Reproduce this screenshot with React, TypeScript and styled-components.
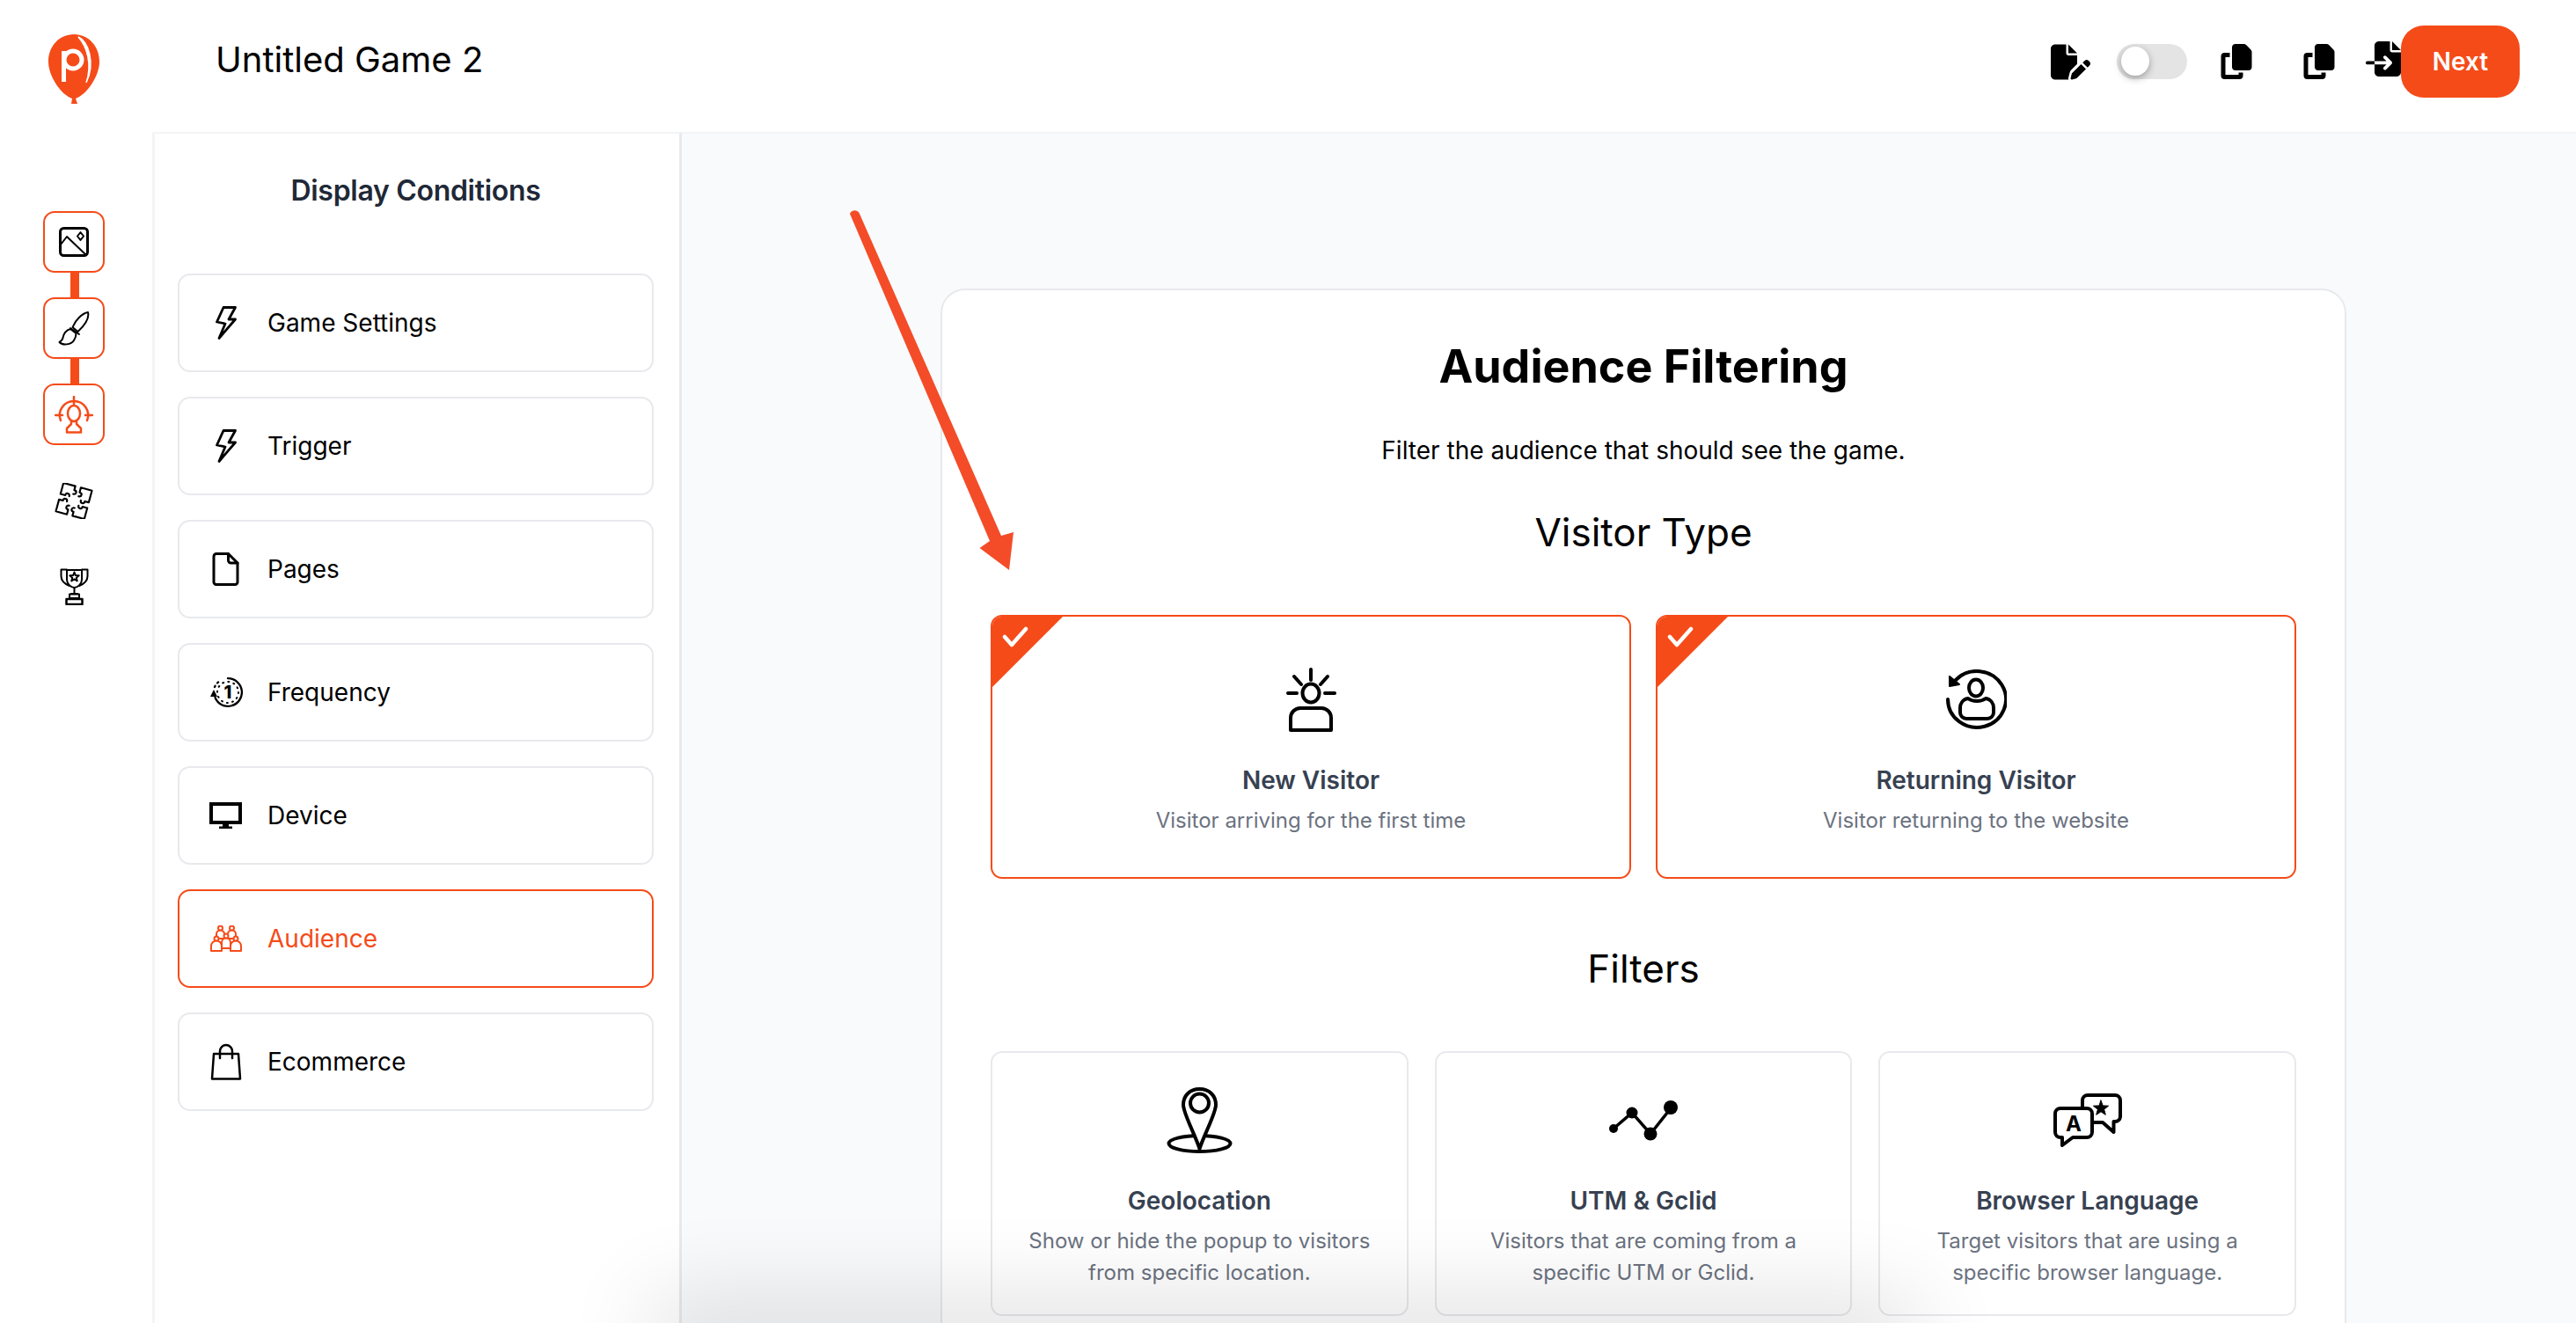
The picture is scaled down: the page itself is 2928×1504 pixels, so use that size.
import styled, { createGlobalStyle } from "styled-components";
import { FaFilePen, FaCopy, FaFileImport } from "react-icons/fa6";
import type { ReactNode } from "react";

const ORANGE = "#f54b19";

const GlobalStyle = createGlobalStyle`
  html, body {
    margin: 0;
    padding: 0;
    height: 100%;
    overflow: hidden;
    background: #fff;
  }
  * {
    box-sizing: border-box;
  }
  body {
    font-family: Inter, "Noto Sans", sans-serif;
    color: #000;
  }
`;

const Shell = styled.div`
  position: relative;
  width: 2928px;
  height: 1504px;
  overflow: hidden;
  display: flex;
  flex-direction: column;
`;

const Header = styled.header`
  height: 150px;
  flex: none;
  display: flex;
  align-items: center;
  padding: 0 64px 0 55px;
`;

const Logo = styled.svg`
  width: 58px;
  height: 79px;
  flex: none;
  margin-top: 7px;
`;

const GameTitle = styled.h1`
  margin: -15px 0 0 132px;
  font-size: 40px;
  line-height: 48px;
  font-weight: 400;
  flex: 1;
`;

const ToolIcons = styled.div`
  display: flex;
  align-items: center;
  margin-top: -10px;
  font-size: 40px;
  line-height: 0;
  color: #000;
`;

const Toggle = styled.div`
  position: relative;
  width: 80px;
  height: 40px;
  margin: 0 36px 0 30px;
  border-radius: 20px;
  background: #e4e4e4;
`;

const Knob = styled.span`
  position: absolute;
  left: 5px;
  top: 3px;
  width: 32px;
  height: 33px;
  border-radius: 50%;
  background: #fff;
  box-shadow: 0 3px 8px rgba(0, 0, 0, 0.32);
`;

const ToolGap = styled.span<{ $w: number }>`
  display: block;
  width: ${(p) => p.$w}px;
`;

const ImportSlot = styled.span`
  display: block;
  margin-bottom: 6px;
`;

const NextButton = styled.button`
  width: 135px;
  height: 82px;
  border: 0;
  border-radius: 26px;
  background: ${ORANGE};
  color: #fff;
  font-family: inherit;
  font-size: 28px;
  font-weight: 600;
  margin-top: -10px;
`;

const Body = styled.div`
  flex: 1;
  min-height: 0;
  display: flex;
`;

const Rail = styled.nav`
  width: 173px;
  flex: none;
  padding: 90px 0 0 49px;
  display: flex;
  flex-direction: column;
`;

const Step = styled.div<{ $boxed?: boolean }>`
  width: 70px;
  height: 70px;
  flex: none;
  display: flex;
  align-items: center;
  justify-content: center;
  border-radius: 13px;
  border: 2px solid ${(p) => (p.$boxed ? ORANGE : "transparent")};
`;

const Connector = styled.div<{ $on?: boolean }>`
  width: 10px;
  height: 28px;
  flex: none;
  margin-left: 31px;
  background: ${(p) => (p.$on ? ORANGE : "transparent")};
`;

const Panel = styled.aside`
  width: 602px;
  flex: none;
  border-top: 2px solid #f3f4f6;
  border-left: 3px solid #f3f4f6;
  border-right: 3px solid #e8e9ed;
  padding: 45px 29px 0 26px;
`;

const PanelTitle = styled.h2`
  margin: 0 0 74px;
  font-size: 32px;
  line-height: 40px;
  font-weight: 600;
  letter-spacing: -0.3px;
  color: #1f2937;
  text-align: center;
`;

const ItemList = styled.div`
  display: flex;
  flex-direction: column;
  gap: 28px;
`;

const Item = styled.div<{ $active?: boolean }>`
  height: 112px;
  display: flex;
  align-items: center;
  gap: 28px;
  padding-left: 33px;
  border: 2px solid ${(p) => (p.$active ? ORANGE : "#e8e9ed")};
  border-radius: 14px;
  background: #fff;
  color: ${(p) => (p.$active ? ORANGE : "#000")};
  font-size: 28px;
  line-height: 36px;
`;

const ItemIcon = styled.span`
  width: 39px;
  display: flex;
  justify-content: center;
  flex: none;
`;

const Main = styled.main`
  flex: 1;
  min-width: 0;
  background: #f9fafb;
  border-top: 2px solid #f3f4f6;
  padding: 176px 0 0 294px;
`;

const Card = styled.section`
  width: 1598px;
  height: 1300px;
  background: #fff;
  border: 2px solid #e8e9ed;
  border-radius: 28px;
  padding: 53px 55px 0;
  text-align: center;
`;

const Title = styled.h2`
  margin: 0;
  font-size: 52px;
  line-height: 68px;
  font-weight: 700;
`;

const Sub = styled.p`
  margin: 41px 0 0;
  font-size: 28px;
  line-height: 40px;
`;

const SectionTitle = styled.h3<{ $top: number }>`
  margin: ${(p) => p.$top}px 0 66px;
  font-size: 44px;
  line-height: 56px;
  font-weight: 400;
`;

const Grid = styled.div<{ $cols: number; $gap: number }>`
  display: grid;
  grid-template-columns: repeat(${(p) => p.$cols}, 1fr);
  gap: ${(p) => p.$gap}px;
`;

const OptionCard = styled.div<{ $selected?: boolean }>`
  position: relative;
  height: ${(p) => (p.$selected ? 300 : 301)}px;
  padding-top: ${(p) => (p.$selected ? 57 : 39)}px;
  border: 2px solid ${(p) => (p.$selected ? ORANGE : "#e8e9ed")};
  border-radius: 13px;
  overflow: hidden;
  background: #fff;
`;

const Corner = styled.div`
  position: absolute;
  left: -2px;
  top: -2px;
  width: 84px;
  height: 84px;
  background: ${ORANGE};
  clip-path: polygon(0 0, 100% 0, 0 100%);
`;

const Check = styled.svg`
  position: absolute;
  left: 11px;
  top: 11px;
  width: 30px;
  height: 24px;
`;

const OptionIcon = styled.div`
  height: 75px;
  display: flex;
  align-items: center;
  justify-content: center;
`;

const OptionName = styled.div`
  margin-top: 36px;
  font-size: 28px;
  line-height: 36px;
  font-weight: 600;
  color: #374151;
`;

const OptionText = styled.div`
  margin-top: 10px;
  font-size: 24px;
  line-height: 36px;
  color: #6b7280;
`;

const Arrow = styled.svg`
  position: absolute;
  left: 960px;
  top: 230px;
  width: 200px;
  height: 430px;
`;

const BottomShade = styled.div`
  position: absolute;
  left: 770px;
  width: 1380px;
  bottom: -30px;
  height: 30px;
  box-shadow: 0 0 100px 30px rgba(0, 0, 0, 0.12);
`;

const star = (cx: number, cy: number, R: number, r: number) =>
  Array.from({ length: 10 }, (_, i) => {
    const a = (Math.PI / 5) * i - Math.PI / 2;
    const d = i % 2 ? r : R;
    return `${(cx + d * Math.cos(a)).toFixed(1)},${(cy + d * Math.sin(a)).toFixed(1)}`;
  }).join(" ");

const line = { fill: "none", stroke: "currentColor", strokeLinecap: "round", strokeLinejoin: "round" } as const;

function ImageIcon() {
  return (
    <svg width="34" height="34" viewBox="0 0 34 34" {...line} strokeWidth="2.5">
      <rect x="1.5" y="1.5" width="31" height="31" rx="4" strokeWidth="3" />
      <path d="M2 20 9 11 31 32" strokeWidth="2" />
      <path d="M24.5 6 28 10.5 24.5 15 21 10.5Z" strokeWidth="2" />
    </svg>
  );
}

function BrushIcon() {
  return (
    <svg width="36" height="40" viewBox="0 0 36 40" {...line} strokeWidth="2">
      <path d="M34 2C28 3 20 10 16.500 19L22.500 24C28 19 36 10 34 2Z" />
      <path d="M14 20 24 27" />
      <path d="M14 21C9 22 6 27 5.500 31 5 34 3 35 1.500 36 5 40 15 39 18 34 20 31 20.500 28 20.500 26Z" />
    </svg>
  );
}

function TargetIcon() {
  return (
    <svg width="44" height="43" viewBox="0 0 44 43" {...line} stroke={ORANGE} strokeWidth="2.500">
      <path d="M7 28A16 16 0 0 1 22 6 16 16 0 0 1 37 28" />
      <path d="M22 1V9M1 22H9M35 22H43" />
      <ellipse cx="22" cy="20" rx="7" ry="9" />
      <path d="M19 29V32L14 37V41.500H30V37L25 32V29" />
    </svg>
  );
}

function PuzzleIcon() {
  const piece = "M-2 -17H-17V-3H-11C-11 -7 -6 -7 -6 -3M-2 -17V-12C2 -12 2 -7 -2 -7";
  return (
    <svg width="44" height="41" viewBox="-22 -20.500 44 41" {...line} strokeWidth="2.300">
      <g transform="rotate(15) scale(.93)">
        {[0, 90, 180, 270].map((r) => (
          <path key={r} d={piece} transform={`rotate(${r}) translate(-1 -1)`} />
        ))}
      </g>
    </svg>
  );
}

function TrophyIcon() {
  return (
    <svg width="33" height="42" viewBox="0 0 33 42" {...line} strokeWidth="2">
      <path d="M8 2H25V13C25 18 20 22 16.500 22 13 22 8 18 8 13Z" />
      <path d="M8 1.500H1.500V9C1.500 14 6 18 11 20M25 1.500H31.500V9C31.500 14 27 18 22 20" />
      <polygon points={star(16.500, 10, 5.500, 2.400)} />
      <path d="M16.500 22V29M13 29H20" />
      <path d="M11 29.500H22V34H11Z" />
      <rect x="7.500" y="35" width="18" height="6" strokeWidth="2.500" />
    </svg>
  );
}

function BoltIcon() {
  return (
    <svg width="24" height="38" viewBox="0 0 24 38" {...line} strokeWidth="2.800">
      <path d="M9 1.500H22.500L15 15H22.500L4 36.500 11 20 1.500 18Z" />
    </svg>
  );
}

function PageIcon() {
  return (
    <svg width="31" height="38" viewBox="0 0 31 38" {...line} strokeWidth="3">
      <path d="M5 1.500H18.500L29 12V33A3 3 0 0 1 26 36.500H5A3 3 0 0 1 2 33V4.500A3 3 0 0 1 5 1.500Z" />
      <path d="M18.500 1.500V9A3 3 0 0 0 21.500 12H29" />
    </svg>
  );
}

function ClockIcon() {
  return (
    <svg width="38" height="36" viewBox="0 0 38 36" {...line} strokeWidth="2.300">
      <path d="M21 2.200A15.800 15.800 0 1 1 6.500 24" />
      <path d="M6 12A15.800 15.800 0 0 1 12 5" strokeDasharray="1.500 4" />
      <circle cx="21" cy="18" r="12" strokeDasharray="1 5.280" strokeWidth="2" />
      <polygon points="5,15 1,23 9,23" fill="currentColor" stroke="none" />
      <text x="21" y="25" textAnchor="middle" fontFamily="Inter" fontWeight="800" fontSize="20" fill="currentColor" stroke="none">
        1
      </text>
    </svg>
  );
}

function MonitorIcon() {
  return (
    <svg width="37" height="30" viewBox="0 0 37 30" fill="currentColor">
      <path d="M0 0H37V25H22V27.500H26V30H11V27.500H15V25H0ZM4 4V21H33V4Z" fillRule="evenodd" />
    </svg>
  );
}

function AudienceIcon() {
  const person = (x: number, y: number, r: number, w: number, bottom: number) => (
    <g key={`${x}-${y}`}>
      <path d={`M${x - w} ${bottom}V${y + r + w}A${w} ${w} 0 0 1 ${x + w} ${y + r + w}V${bottom}Z`} fill="#fff" />
      <circle cx={x} cy={y} r={r} fill="#fff" />
    </g>
  );
  return (
    <svg width="38" height="30" viewBox="0 0 38 30" {...line} stroke={ORANGE} strokeWidth="2">
      {person(12.500, 3, 2.500, 4.500, 15)}
      {person(25.500, 3, 2.500, 4.500, 15)}
      {person(19, 12, 2.500, 5, 26)}
      {person(8, 15, 2.500, 6, 29)}
      {person(30, 15, 2.500, 6, 29)}
    </svg>
  );
}

function BagIcon() {
  return (
    <svg width="36" height="42" viewBox="0 0 36 42" {...line} strokeWidth="2.500">
      <path d="M4 12H32L34 40.500H2Z" />
      <path d="M11 17V9A7 7 0 0 1 25 9V17" />
    </svg>
  );
}

function NewVisitorIcon() {
  return (
    <svg width="58" height="73" viewBox="0 0 58 73" {...line} strokeWidth="4">
      <path d="M29 2V14M10 10 18 19M48 10 40 19M3 29H13M45 29H56" />
      <ellipse cx="29" cy="29" rx="9.500" ry="10.500" />
      <path d="M6 71V57A11 11 0 0 1 17 46H41A11 11 0 0 1 52 57V71Z" />
    </svg>
  );
}

function ReturningIcon() {
  return (
    <svg width="70" height="69" viewBox="0 0 70 69" {...line} strokeWidth="4">
      <path d="M3 34A33 32 0 1 0 12 12" />
      <polygon points="5,8 5,19 16,17" fill="currentColor" strokeWidth="2" />
      <ellipse cx="35" cy="21" rx="8" ry="9.500" />
      <path d="M26 33C20 34 17 39 17 44V49A7 7 0 0 0 24 56H48A7 7 0 0 0 55 49V44C55 39 52 34 46 33 41 37 31 37 26 33Z" />
    </svg>
  );
}

function GeoIcon() {
  return (
    <svg width="75" height="75" viewBox="0 0 75 75" {...line} strokeWidth="4">
      <ellipse cx="37.500" cy="64" rx="35" ry="9" />
      <path d="M37.500 2C26 2 19 10 19 20 19 30 33 55 37.500 70 42 55 56 30 56 20 56 10 49 2 37.500 2Z" fill="#fff" />
      <ellipse cx="37.500" cy="18" rx="10.500" ry="10.500" />
    </svg>
  );
}

function UtmIcon() {
  return (
    <svg width="78" height="46" viewBox="0 0 78 46" fill="currentColor">
      <path d="M5 32 26 14 47 38 70 9" fill="none" stroke="currentColor" strokeWidth="3.500" />
      <circle cx="5" cy="32" r="5" />
      <circle cx="26" cy="14" r="6.500" />
      <circle cx="47" cy="38" r="7.500" />
      <circle cx="70" cy="8" r="8" />
    </svg>
  );
}

function LanguageIcon() {
  return (
    <svg width="78" height="61" viewBox="0 0 78 61" {...line} strokeWidth="4">
      <path d="M39 2H70A6 6 0 0 1 76 8V26A6 6 0 0 1 70 32H68.500V44L56 33H39A6 6 0 0 1 33 27V8A6 6 0 0 1 39 2Z" />
      <polygon points={star(54, 17, 9, 3.800)} fill="currentColor" strokeWidth="1" />
      <path d="M8 17H38A6 6 0 0 1 44 23V44A6 6 0 0 1 38 50H22L10 59V50H8A6 6 0 0 1 2 44V23A6 6 0 0 1 8 17Z" fill="#fff" />
      <text x="23" y="43" textAnchor="middle" fontFamily="Inter" fontWeight="700" fontSize="24" fill="currentColor" stroke="none">
        A
      </text>
    </svg>
  );
}

const steps: { icon: ReactNode; boxed?: boolean; link?: boolean }[] = [
  { icon: <ImageIcon />, boxed: true, link: true },
  { icon: <BrushIcon />, boxed: true, link: true },
  { icon: <TargetIcon />, boxed: true },
  { icon: <PuzzleIcon /> },
  { icon: <TrophyIcon /> },
];

const items: { label: string; icon: ReactNode; active?: boolean }[] = [
  { label: "Game Settings", icon: <BoltIcon /> },
  { label: "Trigger", icon: <BoltIcon /> },
  { label: "Pages", icon: <PageIcon /> },
  { label: "Frequency", icon: <ClockIcon /> },
  { label: "Device", icon: <MonitorIcon /> },
  { label: "Audience", icon: <AudienceIcon />, active: true },
  { label: "Ecommerce", icon: <BagIcon /> },
];

const visitors = [
  { name: "New Visitor", text: "Visitor arriving for the first time", icon: <NewVisitorIcon /> },
  { name: "Returning Visitor", text: "Visitor returning to the website", icon: <ReturningIcon /> },
];

const filters: { name: string; lines: string[]; icon: ReactNode }[] = [
  { name: "Geolocation", lines: ["Show or hide the popup to visitors", "from specific location."], icon: <GeoIcon /> },
  { name: "UTM & Gclid", lines: ["Visitors that are coming from a", "specific UTM or Gclid."], icon: <UtmIcon /> },
  { name: "Browser Language", lines: ["Target visitors that are using a", "specific browser language."], icon: <LanguageIcon /> },
];

export default function App() {
  return (
    <Shell>
      <GlobalStyle />
      <Header>
        <Logo viewBox="0 0 58 79">
          <path
            d="M29 0C46 0 58 14 58 31 58 48 43 69 31 73L33 79H26L27 73C15 69 0 48 0 31 0 14 12 0 29 0Z"
            fill={ORANGE}
          />
          <circle cx="28" cy="29" r="10" fill="none" stroke="#fff" strokeWidth="5" />
          <path d="M17.500 19V54" stroke="#fff" strokeWidth="5" />
          <path d="M34 3C45 8 54 32 43 55 50 34 44 14 34 3Z" fill="#fff" stroke="#fff" strokeWidth="1.500" />
        </Logo>
        <GameTitle>Untitled Game 2</GameTitle>
        <ToolIcons>
          <FaFilePen size={45} />
          <Toggle>
            <Knob />
          </Toggle>
          <FaCopy />
          <ToolGap $w={54} />
          <FaCopy />
          <ToolGap $w={33} />
          <ImportSlot>
            <FaFileImport />
          </ImportSlot>
        </ToolIcons>
        <NextButton>Next</NextButton>
      </Header>
      <Body>
        <Rail>
          {steps.map((s, i) => (
            <div key={i}>
              <Step $boxed={s.boxed}>{s.icon}</Step>
              <Connector $on={s.link} />
            </div>
          ))}
        </Rail>
        <Panel>
          <PanelTitle>Display Conditions</PanelTitle>
          <ItemList>
            {items.map((it) => (
              <Item key={it.label} $active={it.active}>
                <ItemIcon>{it.icon}</ItemIcon>
                {it.label}
              </Item>
            ))}
          </ItemList>
        </Panel>
        <Main>
          <Card>
            <Title>Audience Filtering</Title>
            <Sub>Filter the audience that should see the game.</Sub>
            <SectionTitle $top={45}>Visitor Type</SectionTitle>
            <Grid $cols={2} $gap={28}>
              {visitors.map((v) => (
                <OptionCard key={v.name} $selected>
                  <Corner />
                  <Check viewBox="0 0 30 24" fill="none" stroke="#fff" strokeWidth="4.500" strokeLinecap="round" strokeLinejoin="round">
                    <path d="M3 12 11 21 27 3" />
                  </Check>
                  <OptionIcon>{v.icon}</OptionIcon>
                  <OptionName>{v.name}</OptionName>
                  <OptionText>{v.text}</OptionText>
                </OptionCard>
              ))}
            </Grid>
            <SectionTitle $top={74}>Filters</SectionTitle>
            <Grid $cols={3} $gap={30}>
              {filters.map((f) => (
                <OptionCard key={f.name}>
                  <OptionIcon>{f.icon}</OptionIcon>
                  <OptionName>{f.name}</OptionName>
                  <OptionText>
                    {f.lines.map((l) => (
                      <div key={l}>{l}</div>
                    ))}
                  </OptionText>
                </OptionCard>
              ))}
            </Grid>
          </Card>
        </Main>
      </Body>
      <Arrow viewBox="960 230 200 430">
        <path
          d="M966 243C968 238 975 238 977 243L1138 609 1152 605 1147 648 1113.500 623 1125 615Z"
          fill="#f44c28"
        />
      </Arrow>
      <BottomShade />
    </Shell>
  );
}
